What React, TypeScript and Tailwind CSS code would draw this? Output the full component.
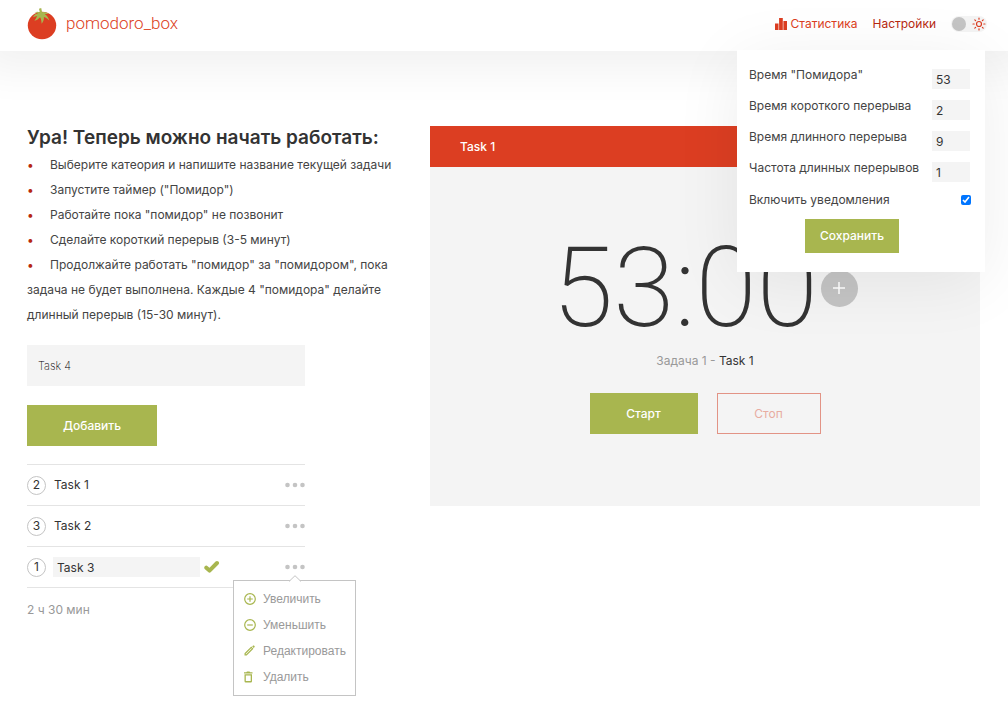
import React, { useState } from "react";

const STEPS = [
  "Выберите катеория и напишите название текущей задачи",
  'Запустите таймер ("Помидор")',
  'Работайте пока "помидор" не позвонит',
  "Сделайте короткий перерыв (3-5 минут)",
  'Продолжайте работать "помидор" за "помидором", пока задача не будет выполнена. Каждые 4 "помидора" делайте длинный перерыв (15-30 минут).',
];

const SETTINGS = [
  { id: "pomodoro", label: 'Время "Помидора"', value: "53" },
  { id: "short", label: "Время короткого перерыва", value: "2" },
  { id: "long", label: "Время длинного перерыва", value: "9" },
  { id: "frequency", label: "Частота длинных перерывов", value: "1" },
];

function TomatoLogo() {
  return (
    <svg width="30" height="32" viewBox="0 0 30 32" aria-hidden="true">
      <ellipse cx="15" cy="17.5" rx="14.2" ry="13.7" fill="#dc3e22" />
      <path
        d="M12 .8l2.200-.8.9 4.200c2.300-.7 4.600-.2 6.600 1.900-1.600-.4-2.900-.2-3.900.2 2.200 1.300 3.700 3.300 4.500 6.300-1.900-2.200-3.600-3.200-5.400-3.700.3 2.300-.6 4.600-2.300 6.900-.1-2.700-.6-4.900-1.500-6.500-1.300 1.500-3.300 3-5.700 3.500 1.200-1.400 2-3.200 2.700-4.900-1.300.1-2.700.5-4.100 1.400.7-2.200 2.800-3.800 5.200-4-1.200-.7-2.300-.9-3.700-.8 1.800-1 3.700-1 5.300-.2z"
        fill="#a8b64f"
      />
    </svg>
  );
}

function BarsIcon() {
  return (
    <svg width="12" height="12" viewBox="0 0 12 12" fill="#dc3e22" aria-hidden="true">
      <path d="M0 5.500h3.500V12H0zM4.100 0h3.700v12H4.100zM8.400 3H12v9H8.400z" />
    </svg>
  );
}

function SunIcon() {
  return (
    <svg width="14" height="14" viewBox="0 0 14 14" fill="none" stroke="#dc3e22" strokeWidth="1.200" strokeLinecap="round" aria-hidden="true">
      <circle cx="7" cy="7" r="2.500" />
      <path d="M7 1v1.200M7 11.800V13M1 7h1.200M11.800 7H13M2.800 2.800l.8.8M10.400 10.400l.8.8M2.800 11.200l.8-.8M10.400 3.600l.8-.8" />
    </svg>
  );
}

function DotsIcon() {
  return (
    <svg width="20" height="6" viewBox="0 0 20 6" fill="#c4c4c4" aria-hidden="true">
      <circle cx="2.500" cy="3" r="2.300" />
      <circle cx="10" cy="3" r="2.300" />
      <circle cx="17.500" cy="3" r="2.300" />
    </svg>
  );
}

function PlusCircle() {
  return (
    <svg width="12" height="12" viewBox="0 0 12 12" fill="none" stroke="#a8b64f" strokeWidth="1.200" aria-hidden="true">
      <circle cx="6" cy="6" r="5.300" />
      <path d="M6 3.200v5.600M3.200 6h5.600" />
    </svg>
  );
}

function MinusCircle() {
  return (
    <svg width="12" height="12" viewBox="0 0 12 12" fill="none" stroke="#a8b64f" strokeWidth="1.200" aria-hidden="true">
      <circle cx="6" cy="6" r="5.300" />
      <path d="M3.200 6h5.600" />
    </svg>
  );
}

function PencilIcon() {
  return (
    <svg width="12" height="12" viewBox="0 0 12 12" aria-hidden="true">
      <path d="M1.100 9.900V8.600L7.300 2.400l1.300 1.300L2.400 9.900z" fill="none" stroke="#a8b64f" strokeWidth="1.200" />
      <path d="M8.200 1.500l.9-.9q.5-.4.9 0l.6.6q.4.500 0 .9l-.9.900z" fill="#a8b64f" />
    </svg>
  );
}

function TrashIcon() {
  return (
    <svg width="12" height="12" viewBox="0 0 12 12" fill="#a8b64f" aria-hidden="true">
      <path d="M0 1.300h2.300L3 .6h2.500l.7.700h2.300v1.300H0zM.5 3.200H8V10.200q0 1.200-1.200 1.200H1.700q-1.200 0-1.200-1.200zM1.800 4.400v5.700h4.900V4.400z" fillRule="evenodd" />
    </svg>
  );
}

function CheckIcon() {
  return (
    <svg width="16" height="14" viewBox="0 0 16 14" fill="none" stroke="#a8b64f" strokeWidth="4" strokeLinecap="round" strokeLinejoin="round" aria-hidden="true">
      <path d="M2.300 7.700L5.500 10.600 13 3" />
    </svg>
  );
}

const MENU = [
  { label: "Увеличить", icon: <PlusCircle /> },
  { label: "Уменьшить", icon: <MinusCircle /> },
  { label: "Редактировать", icon: <PencilIcon /> },
  { label: "Удалить", icon: <TrashIcon /> },
];

function TaskMenu() {
  return (
    <div className="absolute top-full -right-[51px] mt-[9px] w-[123px] border border-[#c4c4c4] bg-white py-[5px] pl-2.5 font-['Liberation_Sans',sans-serif] text-[12px] text-[#999]">
      <svg className="absolute -top-[6px] left-1/2 -translate-x-1/2" width="12" height="7" viewBox="0 0 12 7" aria-hidden="true">
        <path d="M0 6.500L6 .7l6 5.800" fill="#fff" stroke="#c4c4c4" />
      </svg>
      <ul>
        {MENU.map((item) => (
          <li key={item.label}>
            <button type="button" className="flex h-[26px] items-center gap-[7px] whitespace-nowrap">
              {item.icon}
              {item.label}
            </button>
          </li>
        ))}
      </ul>
    </div>
  );
}

function TaskRow({ count, name, editing = false }: { count: number; name: string; editing?: boolean }) {
  const [value, setValue] = useState(name);
  return (
    <li className="flex h-[41px] items-center border-t border-[#e4e4e4]">
      <span className="flex size-[19px] items-center justify-center rounded-full border border-[#c4c4c4]">{count}</span>
      {editing ? (
        <>
          <input
            aria-label="Название задачи"
            value={value}
            onChange={(e) => setValue(e.target.value)}
            className="ml-[7px] h-5 w-[147px] bg-[#f4f4f4] px-1 outline-none"
          />
          <button type="button" aria-label="Сохранить задачу" className="ml-1">
            <CheckIcon />
          </button>
        </>
      ) : (
        <span className="ml-2">{name}</span>
      )}
      <div className="relative ml-auto">
        <button type="button" aria-label={"Меню " + name} className="flex h-2 items-center">
          <DotsIcon />
        </button>
        {editing && <TaskMenu />}
      </div>
    </li>
  );
}

function SettingsPanel() {
  return (
    <form
      className="absolute top-[50px] right-[23px] z-10 w-[248px] bg-white pt-[19px] pr-[15px] pb-[19px] pl-3 text-[#444] shadow-[0_10px_63px_rgba(0,0,0,0.07)]"
      onSubmit={(e) => e.preventDefault()}
    >
      {SETTINGS.map((s) => (
        <div key={s.id} className="flex h-[31px] justify-between">
          <label htmlFor={s.id} className="h-3 leading-3">
            {s.label}
          </label>
          <input id={s.id} defaultValue={s.value} className="h-5 w-[38px] bg-[#f4f4f4] px-1 text-[#333] outline-none" />
        </div>
      ))}
      <div className="flex h-[14px] items-center justify-between">
        <label htmlFor="notify">Включить уведомления</label>
        <input id="notify" type="checkbox" defaultChecked className="-mr-px size-[10px] accent-[#0075ff]" />
      </div>
      <button type="submit" className="mt-3 ml-14 block h-[34px] w-[94px] bg-[#a8b64f] font-medium text-white">
        Сохранить
      </button>
    </form>
  );
}

export default function App() {
  return (
    <div className="min-h-screen overflow-x-hidden bg-white font-['Inter',sans-serif] text-[12px] text-[#333]">
      <header className="relative flex h-[51px] items-center bg-white pr-[21px] pb-[3px] pl-[27px] shadow-[0_0_40px_20px_rgba(0,0,0,0.055)]">
        <a href="#" className="flex items-center gap-[9px] font-['Roboto',sans-serif] text-[17px] font-light text-[#dc3e22]">
          <TomatoLogo />
          pomodoro_box
        </a>
        <nav className="ml-auto flex items-center text-[#b7280f]">
          <a href="#stats" className="mr-[15px] flex items-center gap-1 text-[#dc3e22]">
            <BarsIcon />
            Статистика
          </a>
          <button type="button" className="mr-[15px]">Настройки</button>
          <button type="button" aria-label="Переключить тему" className="flex h-4 w-9 items-center justify-between rounded-full bg-[#f4f4f4] px-px">
            <span className="size-[14px] rounded-full bg-[#c4c4c4]" />
            <SunIcon />
          </button>
        </nav>
        <SettingsPanel />
      </header>

      <main className="grid grid-cols-[403px_1fr] items-start pt-[75px] pr-7 pl-[27px]">
        <section className="pr-4">
          <h1 className="text-[19px] leading-6 font-semibold">Ура! Теперь можно начать работать:</h1>
          <ul className="mt-0.5 leading-[25px] text-[#444]">
            {STEPS.map((step) => (
              <li key={step} className="before:inline-block before:w-[23px] before:text-[#b7280f] before:content-['•']">
                {step}
              </li>
            ))}
          </ul>
          <div className="w-[278px]">
            <form onSubmit={(e) => e.preventDefault()}>
              <input
                aria-label="Название задачи"
                defaultValue="Task 4"
                className="mt-[18px] block h-[41px] w-full bg-[#f4f4f4] px-[11px] text-[11px] font-extralight text-black outline-none"
              />
              <button type="submit" className="mt-[19px] h-[41px] w-[130px] bg-[#a8b64f] font-medium text-white">
                Добавить
              </button>
            </form>
            <ul className="mt-[18px] border-b border-[#e4e4e4]">
              <TaskRow count={2} name="Task 1" />
              <TaskRow count={3} name="Task 2" />
              <TaskRow count={1} name="Task 3" editing />
            </ul>
            <p className="mt-3 leading-5 text-[#999]">2 ч 30 мин</p>
          </div>
        </section>

        <section className="bg-[#f4f4f4] pb-[72px]">
          <h2 className="flex h-[41px] items-center bg-[#dc3e22] px-[30px] font-medium text-white">Task 1</h2>
          <div className="mt-[67px] flex items-center justify-center gap-[3px]">
            <span className="font-['Roboto',sans-serif] text-[111px] leading-[108px] font-extralight">53:00</span>
            <button type="button" aria-label="Добавить минуту" className="flex size-[37px] items-center justify-center rounded-full bg-[#c4c4c4]">
              <svg width="12" height="12" viewBox="0 0 12 12" stroke="#fff" strokeWidth="1.500" aria-hidden="true">
                <path d="M6 0v12M0 6h12" />
              </svg>
            </button>
          </div>
          <p className="mt-[9px] text-center leading-5">
            <span className="text-[#999]">Задача 1 - </span>Task 1
          </p>
          <div className="mt-[22px] flex justify-center gap-[19px]">
            <button type="button" className="h-[41px] w-[108px] bg-[#a8b64f] font-medium text-white">
              Старт
            </button>
            <button type="button" className="h-[41px] w-[104px] border border-[#e29385] text-[#e8aca1]">
              Стоп
            </button>
          </div>
        </section>
      </main>
    </div>
  );
}
